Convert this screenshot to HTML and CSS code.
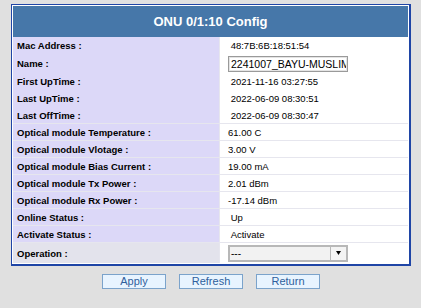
FILE: index.html
```html
<!DOCTYPE html>
<html lang="en">
<head>
  <meta charset="UTF-8" />
  <title>ONU Config</title>
  <link rel="stylesheet" href="styles.css">
</head>
<body>
  <div class="page">
    <table class="config">
      <tr>
        <th class="title" colspan="2">ONU 0/1:10 Config</th>
      </tr>
      <tr class="row-top">
        <td class="label">Mac Address :</td>
        <td class="value">&nbsp;48:7B:6B:18:51:54</td>
      </tr>
      <tr class="row-name">
        <td class="label">Name :</td>
        <td class="value"><input class="name-input" type="text" value="2241007_BAYU-MUSLIM"></td>
      </tr>
      <tr class="row-top">
        <td class="label">First UpTime :</td>
        <td class="value">&nbsp;2021-11-16 03:27:55</td>
      </tr>
      <tr class="row-top">
        <td class="label">Last UpTime :</td>
        <td class="value">&nbsp;2022-06-09 08:30:51</td>
      </tr>
      <tr class="row">
        <td class="label">Last OffTime :</td>
        <td class="value">&nbsp;2022-06-09 08:30:47</td>
      </tr>
      <tr class="row">
        <td class="label">Optical module Temperature :</td>
        <td class="value">61.00 C</td>
      </tr>
      <tr class="row">
        <td class="label">Optical module Vlotage :</td>
        <td class="value">3.00 V</td>
      </tr>
      <tr class="row">
        <td class="label">Optical module Bias Current :</td>
        <td class="value">19.00 mA</td>
      </tr>
      <tr class="row">
        <td class="label">Optical module Tx Power :</td>
        <td class="value">2.01 dBm</td>
      </tr>
      <tr class="row">
        <td class="label">Optical module Rx Power :</td>
        <td class="value">-17.14 dBm</td>
      </tr>
      <tr class="row">
        <td class="label">Online Status :</td>
        <td class="value">&nbsp;Up</td>
      </tr>
      <tr class="row">
        <td class="label">Activate Status :</td>
        <td class="value">&nbsp;Activate</td>
      </tr>
      <tr class="row-op">
        <td class="label">Operation :</td>
        <td class="value">
          <div class="select">
            <span class="select-text">---</span>
            <span class="select-arrow">
              <svg width="5" height="4" viewBox="0 0 5 4"><polygon points="0,0 5,0 2.5,4" fill="#000"/></svg>
            </span>
          </div>
        </td>
      </tr>
    </table>

    <div class="actions">
      <button class="btn">Apply</button>
      <button class="btn">Refresh</button>
      <button class="btn">Return</button>
    </div>
  </div>
</body>
</html>
```

FILE: styles.css
```css
body {
  margin: 0;
  background: #e0e0e0;
  font-family: "Liberation Sans", Arial, sans-serif;
  font-size: 9.5px;
}

.page {
  padding: 4px 0 0 11px;
}

.config {
  width: 400px;
  border-collapse: separate;
  border-spacing: 0;
  background: #fff;
  border: 1px solid #1f45a6;
  border-right-width: 2px;
  border-bottom-width: 2px;
  padding: 1px;
}

.title {
  height: 31px;
  padding: 0;
  background: #4677a9;
  color: #fff;
  font-size: 13px;
  font-weight: bold;
  text-align: center;
}

.label {
  width: 202px;
  padding: 0 0 0 4px;
  background: #dcd8f8;
  color: #000;
  font-weight: bold;
  border-right: 1px solid #e6e6ee;
}

.value {
  padding: 0 0 0 8px;
  color: #000;
}

.row-top td {
  height: 17px;
}

.row-name td {
  height: 19px;
}

.row td {
  height: 16px;
  border-bottom: 1px solid #e6e6ee;
}

.row-op td {
  height: 20px;
}

.row-op .label {
  background: #e3e3ec;
}

.name-input {
  box-sizing: border-box;
  width: 120px;
  height: 16px;
  margin: 0;
  padding: 0 1px 0 2px;
  border: 1px solid #9a9a9a;
  box-shadow: inset 0 0 0 1px #e4e4e4;
  font-family: "Liberation Sans", Arial, sans-serif;
  font-size: 10.5px;
  color: #000;
  background: #fff;
  display: block;
}

.select {
  box-sizing: border-box;
  width: 120px;
  height: 17px;
  display: flex;
  align-items: stretch;
  border: 2px solid #b8b8b8;
  background: #f2f2f2;
}

.select-text {
  flex: 1;
  display: flex;
  align-items: center;
  padding-left: 1px;
  font-size: 10px;
}

.select-arrow {
  width: 15px;
  display: flex;
  align-items: center;
  justify-content: center;
  border-left: 1px solid #b8b8b8;
  background: #f4f4f4;
}

.actions {
  width: 400px;
  display: flex;
  justify-content: center;
  gap: 13px;
  padding-top: 8px;
}

.btn {
  box-sizing: border-box;
  width: 64px;
  height: 15px;
  margin: 0;
  padding: 0;
  border: 1px solid #7ba3cb;
  background: #e8f4ff;
  color: #2f5f9c;
  font-family: "Liberation Sans", Arial, sans-serif;
  font-size: 11px;
  line-height: 13px;
}
```
